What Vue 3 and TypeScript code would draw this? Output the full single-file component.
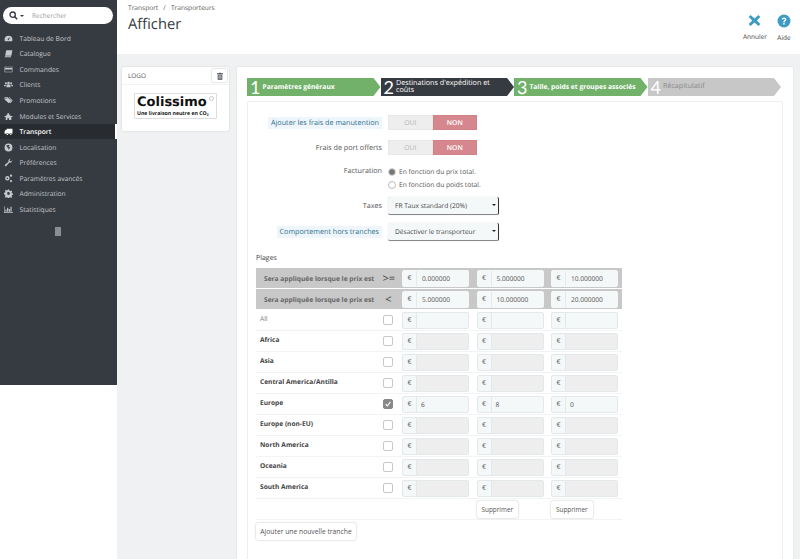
<template>
  <div class="page">
    <nav class="sidebar">
      <div class="search">
        <svg class="search-icon" viewBox="0 0 16 16" width="9" height="9"><circle cx="6.5" cy="6.5" r="4.7" fill="none" stroke="#363a41" stroke-width="2.4" /><path d="M10 10l4.5 4.5" stroke="#363a41" stroke-width="2.6" /></svg>
        <span class="caret"></span>
        <span class="search-text">Rechercher</span>
      </div>
      <ul class="menu">
        <li v-for="item in menu" :key="item.label" :class="{ active: item.label === 'Transport' }">
          <svg viewBox="0 0 16 16" width="10" height="10" class="menu-icon"><path :d="item.icon" /></svg>
          <span>{{ item.label }}</span>
        </li>
      </ul>
      <div class="collapse-handle"></div>
    </nav>

    <div class="main">
      <header class="head">
        <div>
          <div class="crumbs">Transport &nbsp;&nbsp;/&nbsp;&nbsp; Transporteurs</div>
          <h1>Afficher</h1>
        </div>
        <div class="actions">
          <div class="action">
            <svg viewBox="0 0 16 16" width="13" height="13"><path d="M3.2 1.2L8 5.6l4.8-4.4 2.4 2.4L10.8 8l4.4 4.4-2.4 2.4L8 10.400l-4.800 4.400-2.400-2.400L5.200 8 .8 3.600z" fill="#3d9bc4" /></svg>
            <span>Annuler</span>
          </div>
          <div class="action">
            <svg viewBox="0 0 16 16" width="14" height="14"><circle cx="8" cy="8" r="7.4" fill="#3d9bc4" /><path d="M5.4 6.3C5.5 4.7 6.6 3.9 8.1 3.9c1.5 0 2.6.9 2.6 2.2 0 1.9-2 1.9-2 3.5H7.1c0-2.3 1.9-2.4 1.9-3.4 0-.5-.4-.9-1-.9-.6 0-1 .4-1.1 1z" fill="#fff" /><rect x="7.1" y="10.4" width="1.7" height="1.7" fill="#fff" /></svg>
            <span>Aide</span>
          </div>
        </div>
      </header>

      <div class="content">
        <aside class="logo-card">
          <div class="logo-head">
            <span>LOGO</span>
            <span class="trash">
              <svg viewBox="0 0 12 12" width="8" height="8"><path fill-rule="evenodd" d="M1.500 2h3l.5-1h2l.5 1h3v1.200h-9zM2.500 4h7v7.500h-7zM4 5v5h.8V5zM5.600 5v5h.8V5zM7.200 5v5H8V5z" fill="#4a4f55" /></svg>
            </span>
          </div>
          <div class="logo-box">
            <div class="logo-name">Colissimo</div>
            <div class="logo-sub">Une livraison neutre en CO₂</div>
            <i class="logo-mark"></i>
          </div>
        </aside>

        <section class="panel">
          <div class="steps">
            <div v-for="step in steps" :key="step.num" class="step" :class="step.kind">
              <span class="step-num">{{ step.num }}</span>
              <span class="step-label">{{ step.label }}</span>
            </div>
          </div>

          <div class="form">
            <div class="field">
              <label><span class="hint">Ajouter les frais de manutention</span></label>
              <div class="switch"><span>OUI</span><span class="off">NON</span></div>
            </div>
            <div class="field">
              <label>Frais de port offerts</label>
              <div class="switch"><span>OUI</span><span class="off">NON</span></div>
            </div>
            <div class="field radios">
              <label>Facturation</label>
              <div class="radio-list">
                <div class="radio"><i class="dot on"></i>En fonction du prix total.</div>
                <div class="radio"><i class="dot"></i>En fonction du poids total.</div>
              </div>
            </div>
            <div class="field select-field">
              <label>Taxes</label>
              <div class="select">FR Taux standard (20%)<b></b></div>
            </div>
            <div class="field select-field">
              <label><span class="hint">Comportement hors tranches</span></label>
              <div class="select">Désactiver le transporteur<b></b></div>
            </div>

            <h2>Plages</h2>
            <div class="ranges">
              <div v-for="head in heads" :key="head.sign" class="row row-head">
                <div class="range-title">Sera appliquée lorsque le prix est</div>
                <div class="sign">{{ head.sign }}</div>
                <div v-for="val in head.values" :key="val" class="money">
                  <span>€</span><em class="center">{{ val }}</em>
                </div>
              </div>
              <div v-for="zone in zones" :key="zone.name" class="row">
                <div class="zone" :class="{ strong: zone.name !== 'All' }">{{ zone.name }}</div>
                <div class="check-cell">
                  <span class="check" :class="{ checked: zone.values }">
                    <svg v-if="zone.values" viewBox="0 0 10 10" width="8" height="8"><path d="M2 5.2l2.2 2.3L8 2.4" fill="none" stroke="#fff" stroke-width="1.4" /></svg>
                  </span>
                </div>
                <div v-for="n in 3" :key="n" class="money" :class="{ locked: zone.name !== 'All' && !zone.values }">
                  <span>€</span><em>{{ zone.values ? zone.values[n - 1] : '' }}</em>
                </div>
              </div>
              <div class="row row-last">
                <div></div>
                <div></div>
                <div></div>
                <div><button type="button">Supprimer</button></div>
                <div><button type="button">Supprimer</button></div>
              </div>
            </div>
            <button type="button" class="add">Ajouter une nouvelle tranche</button>
          </div>
        </section>
      </div>
    </div>
  </div>
</template>

<script setup lang="ts">
interface Zone {
  name: string
  values?: string[]
}

const menu = [
  { label: 'Tableau de Bord', icon: 'M8 3a7 7 0 0 0-7 7c0 1.2.3 2.3.8 3h12.4c.5-.7.8-1.800.8-3a7 7 0 0 0-7-7zM8 11a1.400 1.400 0 0 1-1-2.400l4-3-2.600 4.400A1.400 1.400 0 0 1 8 11z' },
  { label: 'Catalogue', icon: 'M4 2h11l-2 10H2zM1.500 13h11v1.500h-11z' },
  { label: 'Commandes', icon: 'M1 3h14v10H1zM2 5.500h12V4.200H2zM2 8v3.800h12V8z' },
  { label: 'Clients', icon: 'M8 3a2.300 2.300 0 1 1 0 4.600A2.300 2.300 0 0 1 8 3zM3.400 4a1.800 1.800 0 1 1 0 3.600 1.800 1.800 0 0 1 0-3.600zM12.600 4a1.800 1.800 0 1 1 0 3.600 1.800 1.800 0 0 1 0-3.600zM4.400 13V10c0-1 .8-1.800 2-1.800h3.200c1.200 0 2 .8 2 1.800v3zM0 11V9.600c0-.7.7-1.100 1.600-1.100h2C3.200 9 3 9.600 3 11zM16 11V9.600c0-.7-.7-1.100-1.600-1.100h-2c.4.5.6 1.100.6 2.500z' },
  { label: 'Promotions', icon: 'M1 2h5.500L13 8.500 8.500 13 1 6zM3.500 3.500a1 1 0 1 0 0 2 1 1 0 0 0 0-2zM8.500 2H10l5.500 6.500L11 13l-1-1 3.500-3.500z' },
  { label: 'Modules et Services', icon: 'M6 2h3v3h2v2h4v2h-2v5H9v-3H6v3H3V9H1V7h3V5h2z' },
  { label: 'Transport', icon: 'M5 3h10v9h-1.200a1.900 1.900 0 0 0-3.600 0H7.800a1.900 1.900 0 0 0-3.600 0H1V8l2-3h2zM6 14a1.300 1.300 0 1 1 0-2.600A1.300 1.300 0 0 1 6 14zM12 14a1.300 1.300 0 1 1 0-2.600 1.300 1.300 0 0 1 0 2.600z' },
  { label: 'Localisation', icon: 'M8 1a7 7 0 1 1 0 14A7 7 0 0 1 8 1zM4 4.500L6 8l2 1-.5 3.500 2-2 1.500-3-3-1 2-2.500C8 3 6 3.200 4 4.500z' },
  { label: 'Préférences', icon: 'M14.800 4.200a4 4 0 0 1-5.300 3.800L4 14a1.500 1.500 0 0 1-2.200-2.200L8 6.500A4 4 0 0 1 12 1.200L9.800 3.500l.6 2 2 .6z' },
  { label: 'Paramètres avancés', icon: 'M6 3.500a4 4 0 1 1 0 8 4 4 0 0 1 0-8zM6 6a1.500 1.500 0 1 0 0 3 1.500 1.500 0 0 0 0-3zM12.500 1a2 2 0 1 1 0 4 2 2 0 0 1 0-4zM12.500 10.500a2 2 0 1 1 0 4 2 2 0 0 1 0-4z' },
  { label: 'Administration', icon: 'M6.800 1h2.400l.4 2 1.500.7 1.800-1.100 1.700 1.700-1.100 1.800.6 1.500 2 .4v2.400l-2 .4-.7 1.500 1.100 1.800-1.700 1.700-1.800-1.100-1.500.6-.4 2H6.800l-.4-2-1.500-.7-1.800 1.100-1.700-1.700 1.100-1.800L1.900 10 0 9.200V6.800l2-.4.700-1.500-1.100-1.800 1.700-1.700 1.800 1.100 1.500-.6zM8 5.500a2.500 2.500 0 1 0 0 5 2.500 2.500 0 0 0 0-5z' },
  { label: 'Statistiques', icon: 'M0 2h1v11h15v1.200H0zM2.500 8h2v4h-2zM5.500 5h2v7h-2zM8.500 7h2v5h-2zM11.500 3h2v9h-2z' }
]

const steps = [
  { num: 1, label: 'Paramètres généraux', kind: 'done' },
  { num: 2, label: "Destinations d'expédition et coûts", kind: 'current' },
  { num: 3, label: 'Taille, poids et groupes associés', kind: 'done' },
  { num: 4, label: 'Récapitulatif', kind: 'todo' }
]

const heads = [
  { sign: '>=', values: ['0.000000', '5.000000', '10.000000'] },
  { sign: '<', values: ['5.000000', '10.000000', '20.000000'] }
]

const zones: Zone[] = [
  { name: 'All' },
  { name: 'Africa' },
  { name: 'Asia' },
  { name: 'Central America/Antilla' },
  { name: 'Europe', values: ['6', '8', '0'] },
  { name: 'Europe (non-EU)' },
  { name: 'North America' },
  { name: 'Oceania' },
  { name: 'South America' }
]
</script>

<style>
html,
body {
  margin: 0;
  background: #fff;
}
</style>

<style scoped>
.page {
  display: flex;
  width: 800px;
  height: 559px;
  overflow: hidden;
  font-family: "Open Sans", sans-serif;
  font-size: 7px;
  color: #555;
  text-rendering: geometricPrecision;
}

.sidebar {
  width: 117px;
  height: 385px;
  flex: none;
  background: #363a41;
  padding-top: 7px;
  box-sizing: border-box;
}

.search {
  display: flex;
  align-items: center;
  width: 110px;
  height: 17px;
  margin-left: 3px;
  background: #fff;
  border-radius: 9px;
}

.search-icon {
  margin-left: 6px;
}

.caret {
  margin-left: 2px;
  border: 2px solid transparent;
  border-top: 2.5px solid #363a41;
  border-bottom: 0;
}

.search-text {
  margin-left: 8px;
  color: #999;
  font-size: 6.5px;
}

.menu {
  list-style: none;
  margin: 6.500px 0 0;
  padding: 0;
}

.menu li {
  display: flex;
  align-items: center;
  height: 15.55px;
  padding-left: 4px;
  color: #c5c9cc;
  font-size: 6.7px;
}

.menu-icon {
  width: 9px;
  height: 9px;
  margin-right: 6.5px;
  fill: #c5c9cc;
  fill-rule: evenodd;
}

.menu li.active {
  background: #282b30;
  border-right: 2px solid #fff;
  color: #fff;
  font-weight: 600;
}

.menu li.active .menu-icon {
  fill: #fff;
}

.collapse-handle {
  width: 6px;
  height: 9px;
  margin: 10px 0 0 55px;
  background: #8a8d91;
}

.main {
  flex: 1;
  display: flex;
  flex-direction: column;
  min-width: 0;
}

.head {
  display: flex;
  justify-content: space-between;
  height: 54px;
  flex: none;
  padding: 3px 9px 0 11px;
  box-sizing: border-box;
  background: #fff;
}

.crumbs {
  font-size: 6.6px;
  line-height: 9px;
  color: #555;
}

h1 {
  margin: 1px 0 0;
  font-size: 14.7px;
  font-weight: 400;
  color: #363a41;
  line-height: 22px;
}

.actions {
  display: flex;
  gap: 10px;
  padding-top: 11px;
}

.action {
  display: flex;
  flex-direction: column;
  align-items: center;
  gap: 5px;
  font-size: 6.5px;
  color: #444;
}

.content {
  flex: 1;
  display: flex;
  align-items: flex-start;
  gap: 8px;
  padding: 13px 7px 0 5px;
  background: #eff1f2;
}

.logo-card {
  width: 107px;
  height: 64px;
  flex: none;
  background: #fff;
  border-radius: 2px;
  box-shadow: 0 0 2px rgba(0, 0, 0, 0.15);
  box-sizing: border-box;
}

.logo-head {
  display: flex;
  align-items: center;
  justify-content: space-between;
  height: 17px;
  padding: 0 2px 0 6px;
  font-size: 6.4px;
  color: #555;
  border-bottom: 1px solid #f2f3f4;
}

.trash {
  display: flex;
  align-items: center;
  justify-content: center;
  width: 15px;
  height: 13px;
  box-shadow: 0 0 2px rgba(0, 0, 0, 0.35);
  border-radius: 1px;
}

.logo-box {
  position: relative;
  width: 83px;
  height: 26px;
  margin: 8px 0 0 12px;
  padding: 1px 0 0 2px;
  border: 1px solid #ddd;
  border-radius: 1px;
  box-sizing: border-box;
  color: #111;
}

.logo-name {
  font-family: "DejaVu Sans", sans-serif;
  font-size: 13px;
  font-weight: 700;
  line-height: 15px;
}

.logo-sub {
  font-size: 5.2px;
  font-weight: 700;
  line-height: 6px;
  white-space: nowrap;
}

.logo-mark {
  position: absolute;
  top: 2px;
  right: 2px;
  width: 5px;
  height: 5px;
  border: 1px solid #ccc;
  border-radius: 50%;
  box-sizing: border-box;
}

.panel {
  flex: 1;
  min-height: 510px;
  padding: 11px 10px 0;
  background: #fff;
  border-radius: 2px;
  box-shadow: 0 0 2px rgba(0, 0, 0, 0.12);
}

.steps {
  display: grid;
  grid-template-columns: repeat(4, 133.5px);
  height: 18px;
}

.step {
  display: flex;
  align-items: center;
  gap: 2px;
  padding: 0 10px 0 3px;
  clip-path: polygon(0 0, calc(100% - 7px) 0, 100% 50%, calc(100% - 7px) 100%, 0 100%);
  box-sizing: border-box;
  color: #fff;
  font-weight: 700;
  font-size: 6.7px;
  line-height: 7.5px;
}

.step-num {
  font-family: Lato, sans-serif;
  font-size: 18px;
  font-weight: 400;
  line-height: 18px;
}

.step.done {
  background: #72b16a;
}

.step.current {
  background: #363a41;
  font-size: 7.2px;
  font-weight: 400;
}

.step.todo {
  background: #c7c7c7;
  color: #8a8a8a;
  font-size: 7.2px;
  font-weight: 400;
}

.step.todo .step-num {
  color: #fff;
}

.form {
  margin-top: 5px;
  padding: 13px 8px 0;
  height: 470px;
  border: 1px solid #eceeef;
  border-radius: 2px;
  box-sizing: border-box;
}

.field {
  display: flex;
  align-items: center;
  margin-bottom: 10px;
}

.field > label {
  width: 126px;
  margin-right: 6px;
  text-align: right;
  font-size: 7.2px;
  color: #555;
  white-space: nowrap;
}

.hint {
  padding: 1px 3px;
  background: #eef6fb;
  color: #31708f;
}

.switch {
  display: flex;
  height: 15px;
  width: 89px;
  font-size: 6.8px;
}

.switch span {
  flex: 1;
  display: flex;
  align-items: center;
  justify-content: center;
  background: #eee;
  color: #b5b5b5;
  box-shadow: inset 0 0 1px rgba(0, 0, 0, 0.25);
}

.switch .off {
  background: #d6878d;
  color: #fff;
  font-weight: 600;
}

.radios {
  align-items: flex-start;
  margin-bottom: 6px;
}

.radios > label {
  line-height: 13px;
}

.radio {
  display: flex;
  align-items: center;
  gap: 3px;
  height: 13px;
  font-size: 6.7px;
  white-space: nowrap;
}

.dot {
  width: 8px;
  height: 8px;
  border: 1px solid #bbb;
  border-radius: 50%;
  box-sizing: border-box;
  background: #fff;
}

.dot.on {
  border: 1.5px solid #ddd;
  background: #777;
}

.select-field {
  margin-bottom: 8px;
}

.select {
  position: relative;
  width: 111px;
  height: 18px;
  padding-left: 7px;
  box-sizing: border-box;
  background: #f5f8f9;
  border-radius: 2px;
  border-right: 1px solid #333;
  border-bottom: 1px solid #888;
  box-shadow: 0 0 1px rgba(0, 0, 0, 0.25);
  font-size: 6.6px;
  line-height: 17px;
  color: #444;
}

.select b {
  position: absolute;
  top: 7px;
  right: 2px;
  border: 2px solid transparent;
  border-top: 2.5px solid #222;
  border-bottom: 0;
}

h2 {
  margin: 12px 0 4px;
  font-size: 7px;
  font-weight: 400;
  line-height: 11px;
  color: #444;
}

.ranges {
  width: 366px;
}

.row {
  display: grid;
  grid-template-columns: 109px 22px 67px 67px 67px;
  column-gap: 7.5px;
  align-items: center;
  height: 21px;
  border-bottom: 1px solid #f2f3f4;
  box-sizing: border-box;
}

.row-head {
  background: #c8c8c8;
  border-bottom: 1px solid #fff;
}

.range-title {
  padding-left: 8px;
  font-size: 6.65px;
  font-weight: 700;
  color: #666;
  white-space: nowrap;
}

.sign {
  padding-left: 10px;
  font-size: 11px;
  color: #444;
  text-align: center;
}

.zone {
  padding-left: 4px;
  padding-bottom: 3px;
  font-size: 6.6px;
  color: #777;
  white-space: nowrap;
}

.zone.strong {
  color: #444;
  font-weight: 700;
}

.check-cell {
  display: flex;
  margin-left: 10px;
}

.check {
  display: flex;
  align-items: center;
  justify-content: center;
  width: 10px;
  height: 10px;
  border: 1px solid #c8c8c8;
  border-radius: 2px;
  box-sizing: border-box;
  background: #fff;
}

.check.checked {
  border-color: #888;
  background: #888;
}

.money {
  display: flex;
  height: 17px;
  border: 1px solid #e3e8ea;
  border-radius: 2px;
  box-sizing: border-box;
  background: #f5f8f9;
  overflow: hidden;
}

.row-head .money {
  border-color: #f5f8f9;
}

.money span {
  width: 13px;
  flex: none;
  border-right: 1px solid #e3e8ea;
  text-align: center;
  font-size: 7px;
  line-height: 15px;
  color: #666;
}

.money em {
  flex: 1;
  padding-left: 4px;
  font-style: normal;
  font-size: 6.6px;
  line-height: 15px;
  color: #555;
}

.money em.center {
  padding-left: 5px;
}

.money.locked em {
  background: #eee;
}

.row-last {
  border-bottom: 1px solid #f2f3f4;
}

button {
  height: 17px;
  padding: 0 5px;
  border: 0;
  background: #fff;
  border-radius: 2px;
  box-shadow: 0 0 2px rgba(0, 0, 0, 0.3);
  font-family: inherit;
  font-size: 6.4px;
  color: #555;
}

.add {
  display: block;
  width: 100px;
  margin: 3px 0 0;
  padding: 0;
  font-size: 6.75px;
  white-space: nowrap;
}
</style>
